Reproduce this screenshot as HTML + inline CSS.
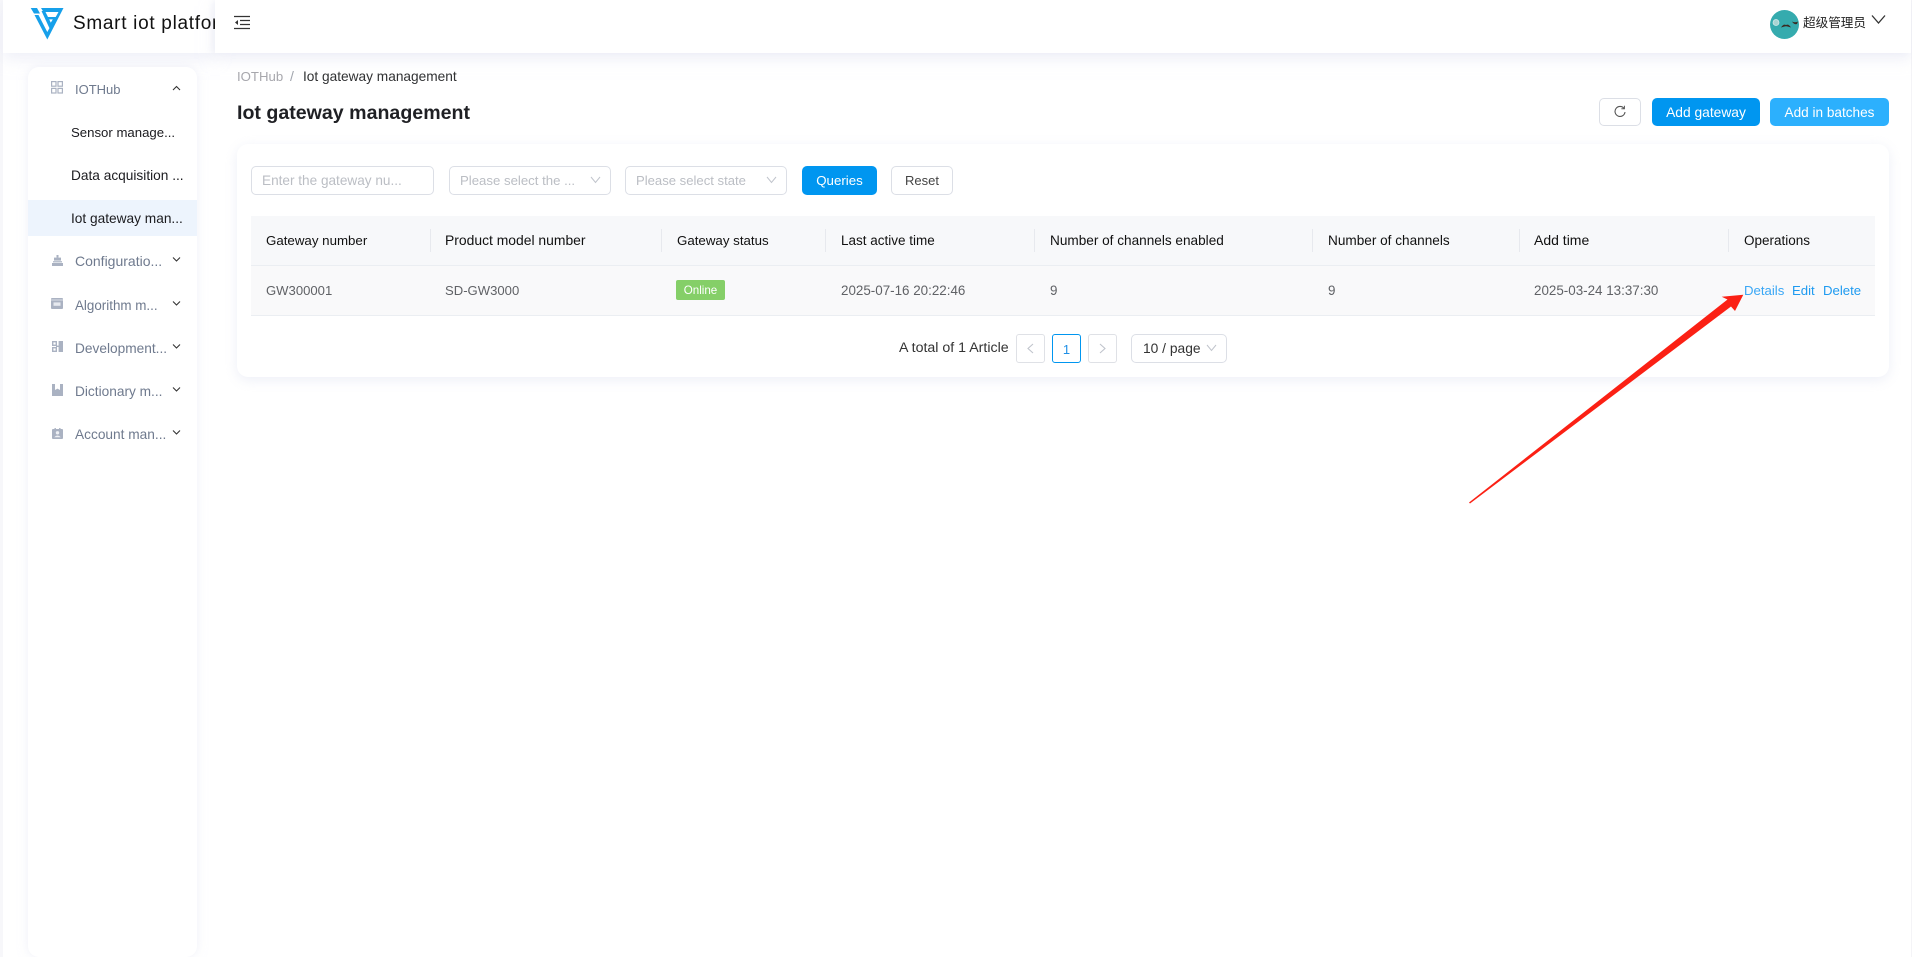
<!DOCTYPE html>
<html><head><meta charset="utf-8"><title>Iot gateway management</title>
<style>
html,body{margin:0;padding:0;width:1912px;height:957px;overflow:hidden;background:#fff;font-family:"Liberation Sans","Noto Sans CJK SC",sans-serif;font-size:14px;color:#303133}
.a,.t{position:absolute;box-sizing:border-box}
.t{white-space:nowrap;line-height:20px}
.sb{color:#6f7a8e;left:75px;font-size:13.7px}
.sub{color:#1b1b1f;left:71px;font-size:13.7px}
.th{top:231px;color:#111;font-size:13.6px}
.td{top:281px;color:#606266;font-size:13.4px}
.box{border:1px solid #dcdfe6;border-radius:5px;background:#fff;height:29px;top:166px}
.ph{color:#bbbec4;top:171px;font-size:13.2px}
.sep{width:1px;height:23px;top:229px;background:#e7e9ee}
.lnk{top:281px;color:#1f9bf0;font-size:13.2px}
.btn{top:98px;height:28px;border-radius:5px;color:#fff;text-align:center;line-height:29px;font-size:13.8px}
.pg{top:334px;width:29px;height:29px;border:1px solid #dfe1e6;border-radius:3px;background:#fff}
</style></head><body>

<!-- outer tints -->
<div class="a" style="left:0;top:0;width:3px;height:957px;background:#f7f7fa"></div>
<div class="a" style="left:1911px;top:0;width:1px;height:957px;background:#f4f4f7"></div>

<!-- header -->
<div class="a" style="left:3px;top:0;width:212px;height:53px;background:#fff;box-shadow:0 6px 14px rgba(225,228,242,.55)"></div>
<div class="a" style="left:215px;top:0;width:1696px;height:53px;background:#fff;box-shadow:0 6px 14px rgba(225,228,242,.55),-3px 0 6px rgba(225,228,242,.35)"></div>

<svg class="a" style="left:30px;top:7px" width="36" height="34" viewBox="0 0 36 34">
<path d="M.7 1H7L10 6.5H4Z" fill="#17a0ea"/>
<path d="M11 1H33.5L17.3 32.5L4.5 8H8.5L17.3 25L28.5 5H13.5Z" fill="#17a0ea"/>
<path d="M11.5 4H15L20.8 15.6L22.8 12.4H18.2L17 10H26.5L19.6 21.5Z" fill="#17a0ea"/>
</svg>
<div class="t" style="left:73px;top:14px;width:142px;overflow:hidden;font-size:19px;letter-spacing:.7px;color:#111">Smart iot platform</div>

<svg class="a" style="left:234px;top:15px" width="17" height="16" viewBox="0 0 17 16" fill="none" stroke="#333" stroke-width="1.3">
<path d="M0 1.5H16M6 5.5H16M6 9.5H16M0 13.5H16"/><path d="M4 5L1 7.5L4 10Z" fill="#333" stroke="none"/>
</svg>

<!-- user -->
<svg class="a" style="left:1770px;top:10px" width="29" height="29" viewBox="0 0 29 29">
<circle cx="14.5" cy="14.5" r="14.5" fill="#35abae"/>
<circle cx="6" cy="12.5" r="3" fill="#a9d4d3" stroke="#d6ecec" stroke-width=".7"/>
<path d="M11 17.5Q13.5 13.5 16 15Q18.5 13.5 21 17.5L18 16.6Q16 15.8 14 16.6Z" fill="#3a2a22"/>
<path d="M22 11.5Q25 13 28 11.5L27 14Q24 15 22 11.5Z" fill="#3a2a22"/>
</svg>
<div class="t" style="left:1803px;top:13px;font-size:12.6px;color:#222">超级管理员</div>
<svg class="a" style="left:1871px;top:14px" width="15" height="11" viewBox="0 0 15 11" fill="none" stroke="#333" stroke-width="1.3"><path d="M1 1.5L7.5 9L14 1.5"/></svg>

<!-- sidebar -->
<div class="a" style="left:28px;top:67px;width:169px;height:890px;background:#fff;border-radius:11px;box-shadow:0 0 10px rgba(225,228,242,.55)"></div>
<div class="a" style="left:28px;top:200px;width:169px;height:36px;background:#edf4fd"></div>

<svg class="a" style="left:51px;top:81px" width="12" height="13" viewBox="0 0 12 13" fill="none" stroke="#aab2c2" stroke-width="1.2"><rect x=".6" y=".6" width="4.4" height="4.6"/><rect x="7" y=".6" width="4.4" height="4.6"/><rect x=".6" y="7.4" width="4.4" height="4.6"/><rect x="7" y="7.4" width="4.4" height="4.6"/></svg>
<div class="t sb" style="top:80px;font-size:13px">IOTHub</div>
<svg class="a" style="left:172px;top:85px" width="9" height="7" viewBox="0 0 9 7" fill="none" stroke="#333" stroke-width="1.1"><path d="M1 5L4.5 1.5L8 5"/></svg>

<div class="t sub" style="top:123px;font-size:13.2px">Sensor manage...</div>
<div class="t sub" style="top:166px">Data acquisition ...</div>
<div class="t sub" style="top:209px">Iot gateway man...</div>

<svg class="a" style="left:52px;top:255px" width="11" height="11" viewBox="0 0 11 11" fill="#aab2c2"><rect x="4.5" y="0" width="2" height="2.6"/><rect x="2" y="2.6" width="7" height="3"/><rect x="1" y="6.2" width="9" height="1.2"/><rect x="0" y="8" width="11" height="3"/></svg>
<div class="t sb" style="top:251px;font-size:14px">Configuratio...</div>
<svg class="a" style="left:172px;top:256px" width="9" height="7" viewBox="0 0 9 7" fill="none" stroke="#333" stroke-width="1.1"><path d="M1 1.5L4.5 5L8 1.5"/></svg>

<svg class="a" style="left:51px;top:298px" width="12" height="11" viewBox="0 0 12 11"><rect width="12" height="11" rx="1" fill="#aab2c2"/><rect x="0" y="1.6" width="12" height=".8" fill="#e6e9ef"/><rect x="2.5" y="4.4" width="7" height="3.4" fill="#e6e9ef"/></svg>
<div class="t sb" style="top:296px;font-size:13.4px">Algorithm m...</div>
<svg class="a" style="left:172px;top:300px" width="9" height="7" viewBox="0 0 9 7" fill="none" stroke="#333" stroke-width="1.1"><path d="M1 1.5L4.5 5L8 1.5"/></svg>

<svg class="a" style="left:52px;top:341px" width="11" height="11" viewBox="0 0 11 11"><rect x=".7" y=".7" width="3.6" height="3.6" fill="none" stroke="#aab2c2" stroke-width="1.4"/><rect x=".7" y="6.7" width="3.6" height="3.6" fill="none" stroke="#aab2c2" stroke-width="1.4"/><rect x="4" y="4.6" width="3" height="1.4" fill="#aab2c2"/><rect x="6.6" y="0" width="4.4" height="11" fill="#aab2c2"/></svg>
<div class="t sb" style="top:339px">Development...</div>
<svg class="a" style="left:172px;top:343px" width="9" height="7" viewBox="0 0 9 7" fill="none" stroke="#333" stroke-width="1.1"><path d="M1 1.5L4.5 5L8 1.5"/></svg>

<svg class="a" style="left:52px;top:384px" width="11" height="12" viewBox="0 0 11 12"><path d="M0 0H3V6L5.5 4.6L8 6V0H11V12H0Z" fill="#aab2c2"/></svg>
<div class="t sb" style="top:382px">Dictionary m...</div>
<svg class="a" style="left:172px;top:386px" width="9" height="7" viewBox="0 0 9 7" fill="none" stroke="#333" stroke-width="1.1"><path d="M1 1.5L4.5 5L8 1.5"/></svg>

<svg class="a" style="left:52px;top:428px" width="11" height="11" viewBox="0 0 11 11"><rect y="1" width="11" height="10" rx="1" fill="#aab2c2"/><rect x="2.5" y="0" width="1.4" height="2" fill="#aab2c2"/><rect x="7.1" y="0" width="1.4" height="2" fill="#aab2c2"/><circle cx="5.5" cy="4.8" r="1.7" fill="#eef0f4"/><path d="M2.2 9.2Q5.5 5.8 8.8 9.2Z" fill="#eef0f4"/></svg>
<div class="t sb" style="top:425px">Account man...</div>
<svg class="a" style="left:172px;top:429px" width="9" height="7" viewBox="0 0 9 7" fill="none" stroke="#333" stroke-width="1.1"><path d="M1 1.5L4.5 5L8 1.5"/></svg>

<!-- breadcrumb + title -->
<div class="t" style="left:237px;top:67px;color:#a7a7ad;font-size:13.2px">IOTHub</div>
<div class="t" style="left:290px;top:66px;color:#a0a4ad;font-size:14px">/</div>
<div class="t" style="left:303px;top:67px;color:#303133;font-size:13.7px">Iot gateway management</div>
<div class="t" style="left:237px;top:103px;font-size:19.6px;font-weight:bold;color:#1f2024">Iot gateway management</div>

<!-- top buttons -->
<div class="a" style="left:1599px;top:98px;width:42px;height:28px;border:1px solid #dcdfe6;border-radius:5px;background:#fff"></div>
<svg class="a" style="left:1614px;top:105px" width="12" height="13" viewBox="0 0 12 13" fill="none" stroke="#555" stroke-width="1.1"><path d="M10 3.4A5 5 0 1 0 11 7"/><path d="M10.4 .8V3.8H7.4" stroke-width="1"/></svg>
<div class="a btn" style="left:1652px;width:108px;background:#0096f0">Add gateway</div>
<div class="a btn" style="left:1770px;width:119px;background:#2cb0fd;font-size:13.6px">Add in batches</div>

<!-- card -->
<div class="a" style="left:237px;top:144px;width:1652px;height:233px;background:#fff;border-radius:11px;box-shadow:0 3px 12px rgba(225,228,242,.6)"></div>

<!-- filters -->
<div class="a box" style="left:251px;width:183px"></div>
<div class="t ph" style="left:262px;font-size:13.6px">Enter the gateway nu...</div>
<div class="a box" style="left:449px;width:162px"></div>
<div class="t ph" style="left:460px">Please select the ...</div>
<svg class="a" style="left:590px;top:176px" width="11" height="8" viewBox="0 0 11 8" fill="none" stroke="#c0c4cc" stroke-width="1"><path d="M1 1L5.5 6.5L10 1"/></svg>
<div class="a box" style="left:625px;width:162px"></div>
<div class="t ph" style="left:636px;font-size:13.1px">Please select state</div>
<svg class="a" style="left:766px;top:176px" width="11" height="8" viewBox="0 0 11 8" fill="none" stroke="#c0c4cc" stroke-width="1"><path d="M1 1L5.5 6.5L10 1"/></svg>
<div class="a btn" style="left:802px;top:166px;width:75px;height:29px;line-height:30px;background:#0096f0;font-size:13.3px">Queries</div>
<div class="a btn" style="left:891px;top:166px;width:62px;height:29px;line-height:28px;background:#fff;border:1px solid #dcdfe6;color:#444;font-size:13px">Reset</div>

<!-- table -->
<div class="a" style="left:251px;top:216px;width:1624px;height:50px;background:#f7f8fa;border-bottom:1px solid #ebeef2"></div>
<div class="a" style="left:251px;top:266px;width:1624px;height:50px;background:#f9f9fa;border-bottom:1px solid #ebeef2"></div>
<div class="a sep" style="left:430px"></div>
<div class="a sep" style="left:661px"></div>
<div class="a sep" style="left:825px"></div>
<div class="a sep" style="left:1034px"></div>
<div class="a sep" style="left:1312px"></div>
<div class="a sep" style="left:1519px"></div>
<div class="a sep" style="left:1728px"></div>

<div class="t th" style="left:266px;font-size:13.3px">Gateway number</div>
<div class="t th" style="left:445px;top:230px;font-size:13.9px">Product model number</div>
<div class="t th" style="left:677px;font-size:13.3px">Gateway status</div>
<div class="t th" style="left:841px;font-size:13.5px">Last active time</div>
<div class="t th" style="left:1050px">Number of channels enabled</div>
<div class="t th" style="left:1328px">Number of channels</div>
<div class="t th" style="left:1534px;top:230px;font-size:14px">Add time</div>
<div class="t th" style="left:1744px;font-size:13.5px">Operations</div>

<div class="t td" style="left:266px;font-size:13.1px">GW300001</div>
<div class="t td" style="left:445px;font-size:13.1px">SD-GW3000</div>
<div class="a" style="left:676px;top:280px;width:49px;height:20px;background:#85cf68;border-radius:2px;color:#fff;font-size:11.6px;line-height:22px;text-align:center">Online</div>
<div class="t td" style="left:841px">2025-07-16 20:22:46</div>
<div class="t td" style="left:1050px">9</div>
<div class="t td" style="left:1328px">9</div>
<div class="t td" style="left:1534px">2025-03-24 13:37:30</div>
<div class="t lnk" style="left:1744px;color:#3aa7f5">Details</div>
<div class="t lnk" style="left:1792px">Edit</div>
<div class="t lnk" style="left:1823px">Delete</div>

<!-- pagination -->
<div class="t" style="left:899px;top:338px;color:#333;font-size:14.2px">A total of 1 Article</div>
<div class="a pg" style="left:1016px"></div>
<svg class="a" style="left:1026px;top:343px" width="9" height="11" viewBox="0 0 9 11" fill="none" stroke="#c0c4cc" stroke-width="1.1"><path d="M7 1L2 5.5L7 10"/></svg>
<div class="a pg" style="left:1052px;border-color:#0096f0;color:#1f8fe6;text-align:center;line-height:29px;font-size:13px">1</div>
<div class="a pg" style="left:1088px"></div>
<svg class="a" style="left:1098px;top:343px" width="9" height="11" viewBox="0 0 9 11" fill="none" stroke="#c0c4cc" stroke-width="1.1"><path d="M2 1L7 5.5L2 10"/></svg>
<div class="a" style="left:1131px;top:334px;width:96px;height:29px;border:1px solid #dcdfe6;border-radius:5px"></div>
<div class="t" style="left:1143px;top:339px;color:#333;font-size:13.8px">10 / page</div>
<svg class="a" style="left:1206px;top:344px" width="11" height="8" viewBox="0 0 11 8" fill="none" stroke="#c0c4cc" stroke-width="1"><path d="M1 1L5.5 6.5L10 1"/></svg>

<!-- arrow -->
<svg class="a" style="left:0;top:0" width="1912" height="957"><polygon points="1469,502.5 1727.5,299.5 1721.7,296.7 1743.3,294.7 1735,311 1731,306.5 1470,503.5" fill="#fb2014"/></svg>
</body></html>
